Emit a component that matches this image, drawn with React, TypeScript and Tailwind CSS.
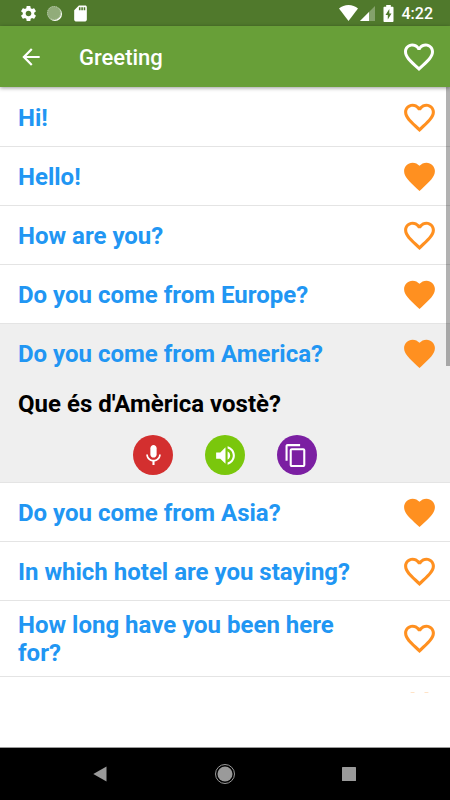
import { useState } from "react";
import {
  MdArrowBack,
  MdFavorite,
  MdFavoriteBorder,
  MdSdCard,
  MdSettings,
  MdVolumeUp,
} from "react-icons/md";

type Phrase = {
  id: number;
  text: string;
  translation: string;
  favorite: boolean;
};

const initialPhrases: Phrase[] = [
  { id: 1, text: "Hi!", translation: "Hola!", favorite: false },
  { id: 2, text: "Hello!", translation: "Hola!", favorite: true },
  { id: 3, text: "How are you?", translation: "Com està?", favorite: false },
  { id: 4, text: "Do you come from Europe?", translation: "Que és d'Europa vostè?", favorite: true },
  { id: 5, text: "Do you come from America?", translation: "Que és d'Amèrica vostè?", favorite: true },
  { id: 6, text: "Do you come from Asia?", translation: "Que és d'Àsia vostè?", favorite: true },
  { id: 7, text: "In which hotel are you staying?", translation: "A quin hotel s'està?", favorite: false },
  { id: 8, text: "How long have you been here for?", translation: "Quant fa que és aquí?", favorite: false },
  { id: 9, text: "", translation: "", favorite: false },
];

const StatusBar = () => (
  <div className="flex h-[26px] shrink-0 items-center justify-between bg-[#50792c] pr-[17px] pl-[19px] text-white">
    <div className="flex items-center gap-[7px]">
      <MdSettings size={19} />
      <svg width="19" height="19" viewBox="0 0 19 19">
        <circle cx="10" cy="10" r="7" fill="#fff" />
        <circle cx="9" cy="9" r="7" fill="#91ac7a" />
        <circle cx="9" cy="9" r="6.5" fill="none" stroke="#b7c9a8" strokeDasharray="1 1" />
      </svg>
      <MdSdCard size={19} />
    </div>
    <div className="flex items-center">
      <svg width="19" height="16" viewBox="0 0 19 16" fill="currentColor">
        <path d="M9.5 16 0 3.4C2.6 1.3 5.9 0 9.5 0s6.9 1.3 9.5 3.4z" />
      </svg>
      <svg className="ml-0.5" width="15" height="15" viewBox="0 0 15 15" fill="currentColor">
        <path d="M0 15 15 0v15z" opacity="0.3" />
        <path d="M0 15 9 6v9z" />
      </svg>
      <svg className="ml-2" width="11" height="17" viewBox="0 0 11 17">
        <path
          fill="currentColor"
          d="M3.2 0h4.6v1.7h1.7c.6 0 1 .4 1 1V16c0 .6-.4 1-1 1h-8c-.6 0-1-.4-1-1V2.7c0-.6.4-1 1-1h1.7z"
        />
        <path fill="#50792c" d="M6.3 4 2.5 10h2.3v4.5l3.7-6H6.3z" />
      </svg>
      <span className="ml-2 pt-0.5 text-base leading-5 font-medium">4:22</span>
    </div>
  </div>
);

const AppBar = ({ title }: { title: string }) => (
  <header className="relative z-10 flex h-[61px] shrink-0 items-center bg-[#689f38] pr-[13px] pl-[18px] text-white shadow-[0_1px_4px_rgba(0,0,0,0.4)]">
    <button aria-label="Back">
      <MdArrowBack size={26} />
    </button>
    <h1 className="ml-[35px] flex-1 pt-0.5 text-[22px] leading-7 font-medium">{title}</h1>
    <button aria-label="Favorites">
      <MdFavoriteBorder size={36} />
    </button>
  </header>
);

const MicIcon = () => (
  <svg width="25" height="25" viewBox="0 0 24 24" fill="currentColor">
    <path d="M12 14c1.66 0 3-1.34 3-3V5c0-1.66-1.34-3-3-3S9 3.34 9 5v6c0 1.66 1.34 3 3 3z" />
    <path d="M17.3 11c0 3-2.54 5.1-5.3 5.1S6.7 14 6.7 11H5c0 3.41 2.72 6.23 6 6.72V21h2v-3.28c3.28-.48 6-3.3 6-6.72h-1.7z" />
  </svg>
);

const CopyIcon = () => (
  <svg width="25" height="25" viewBox="1.5 0 24 24" fill="currentColor">
    <path d="M16 1H4c-1.1 0-2 .9-2 2v14h2V3h12V1zm3 4H8c-1.1 0-2 .9-2 2v14c0 1.1.9 2 2 2h11c1.1 0 2-.9 2-2V7c0-1.1-.9-2-2-2zm0 16H8V7h11v14z" />
  </svg>
);

type PhraseRowProps = {
  phrase: Phrase;
  open: boolean;
  onToggle: () => void;
  onFavorite: () => void;
};

const PhraseRow = ({ phrase, open, onToggle, onFavorite }: PhraseRowProps) => (
  <li className={`border-b border-[#e4e4e4] ${open ? "bg-[#efefef]" : "bg-white"}`}>
    <div className="flex min-h-[58px] items-center gap-10 pr-3 pl-[18px]">
      <button
        className="flex-1 pt-[10px] pb-[9px] text-left text-2xl leading-7 font-bold text-[#2196f3]"
        aria-expanded={open}
        onClick={onToggle}
      >
        {phrase.text}
      </button>
      <button
        className="text-[#ff9020]"
        aria-label={`Favorite ${phrase.text}`}
        aria-pressed={phrase.favorite}
        onClick={onFavorite}
      >
        {phrase.favorite ? <MdFavorite size={37} /> : <MdFavoriteBorder size={37} />}
      </button>
    </div>
    {open && (
      <div className="px-[18px] pt-2 pb-[7px]">
        <p className="text-2xl leading-7 font-bold text-black">{phrase.translation}</p>
        <div className="mt-[17px] flex justify-center gap-8 text-white">
          <button className="grid size-10 place-items-center rounded-full bg-[#d32f2f]" aria-label="Record">
            <MicIcon />
          </button>
          <button className="grid size-10 place-items-center rounded-full bg-[#7ac70c]" aria-label="Listen">
            <MdVolumeUp size={25} />
          </button>
          <button className="grid size-10 place-items-center rounded-full bg-[#7b1fa2]" aria-label="Copy">
            <CopyIcon />
          </button>
        </div>
      </div>
    )}
  </li>
);

const NavigationBar = () => (
  <nav className="flex h-[53px] shrink-0 items-center justify-around border-t border-[#9a9a9a] bg-black px-[38px] text-[#9a9a9a]">
    <button aria-label="Back">
      <svg width="20" height="20" viewBox="0 0 20 20" fill="currentColor">
        <path d="M16.5 2.5v15L3.3 10z" />
      </svg>
    </button>
    <button aria-label="Home">
      <svg width="22" height="22" viewBox="0 0 22 22" fill="currentColor">
        <circle cx="11" cy="11" r="9.5" fill="none" stroke="currentColor" />
        <circle cx="11" cy="11" r="7.5" />
      </svg>
    </button>
    <button aria-label="Overview">
      <svg width="20" height="20" viewBox="0 0 20 20" fill="currentColor">
        <rect x="2" y="3" width="14" height="14" rx="0.5" />
      </svg>
    </button>
  </nav>
);

const App = () => {
  const [phrases, setPhrases] = useState(initialPhrases);
  const [openId, setOpenId] = useState<number | null>(5);

  const toggleFavorite = (id: number) => {
    setPhrases((prev) => prev.map((p) => (p.id === id ? { ...p, favorite: !p.favorite } : p)));
  };

  return (
    <div className="flex h-screen flex-col bg-white font-['Roboto',sans-serif]">
      <StatusBar />
      <AppBar title="Greeting" />
      <main className="relative min-h-0 flex-1">
        <ul className="h-full overflow-y-auto pt-px [scrollbar-width:none]">
          {phrases.map((phrase) => (
            <PhraseRow
              key={phrase.id}
              phrase={phrase}
              open={phrase.id === openId}
              onToggle={() => setOpenId(phrase.id === openId ? null : phrase.id)}
              onFavorite={() => toggleFavorite(phrase.id)}
            />
          ))}
        </ul>
        <div className="absolute top-0 right-0 h-[46%] w-1 bg-black/30" />
      </main>
      {/* space kept for the ad banner */}
      <div className="h-[54px] shrink-0" />
      <NavigationBar />
    </div>
  );
};

export default App;
